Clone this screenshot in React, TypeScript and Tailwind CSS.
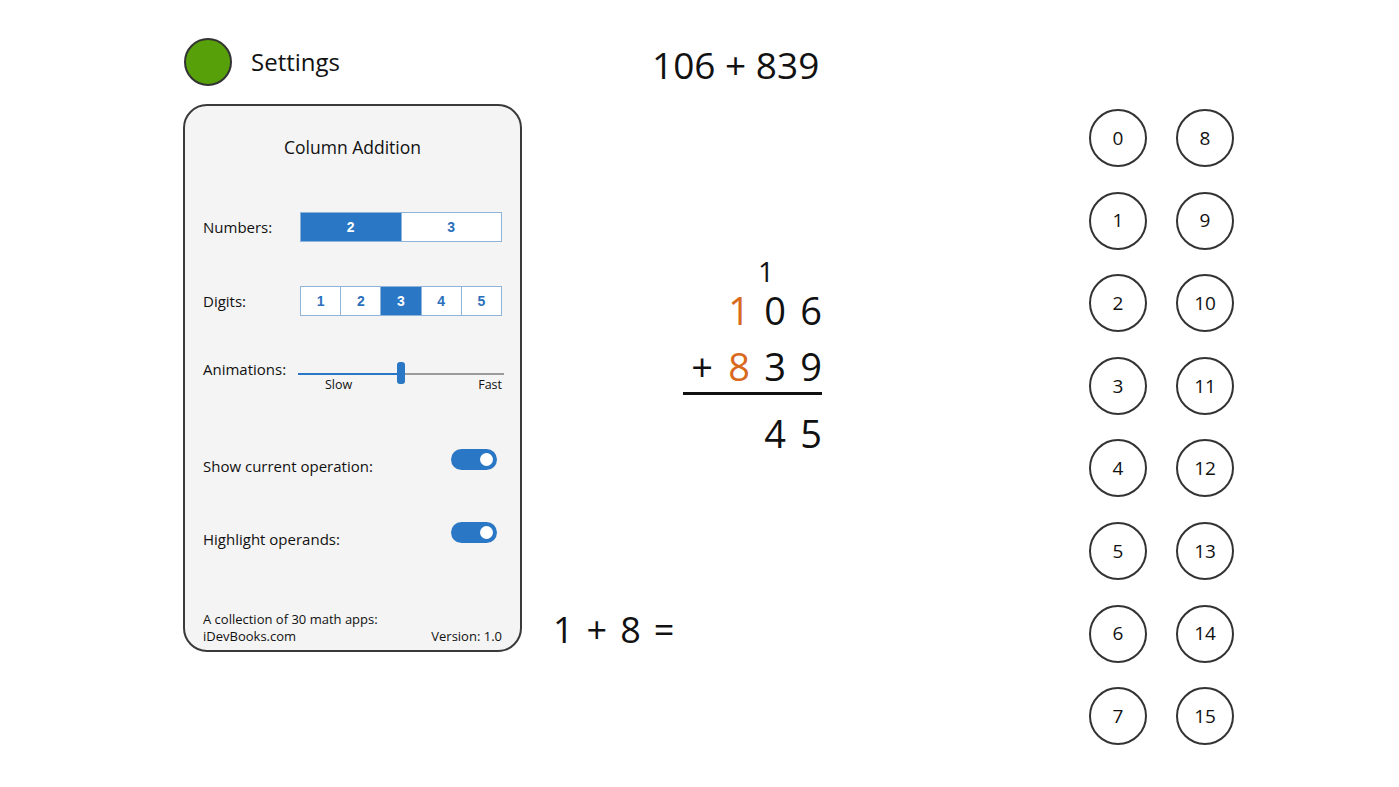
import React from 'react';

const BLUE = 'bg-[#2a77c5]';

const Segmented: React.FC<{ items: string[]; selected: string }> = ({ items, selected }) => (
  <div className="flex h-[30px] w-[202px] border border-[#8fb3da] bg-white font-['Liberation_Sans',sans-serif] text-[14px] font-bold">
    {items.map((it, i) => (
      <div
        key={it}
        className={`flex flex-1 items-center justify-center ${i > 0 ? 'border-l border-[#8fb3da]' : ''} ${
          it === selected ? `${BLUE} text-white` : 'text-[#2a6fbb]'
        }`}
      >
        {it}
      </div>
    ))}
  </div>
);

const Toggle: React.FC = () => (
  <div className={`flex h-[21px] w-[46px] items-center justify-end rounded-full ${BLUE} pr-[4px]`}>
    <div className="h-[13px] w-[13px] rounded-full bg-white" />
  </div>
);

const numbers = [0, 8, 1, 9, 2, 10, 3, 11, 4, 12, 5, 13, 6, 14, 7, 15];

export default function App() {
  return (
    <div className="flex h-[787px] w-[1399px] bg-white pl-[183px] font-['Open_Sans',sans-serif] text-[#111]">
      {/* left: settings */}
      <div className="flex w-[339px] flex-col">
        <div className="mt-[38px] flex h-[48px] items-center gap-[19px]">
          <div className="ml-[1px] h-[48px] w-[48px] rounded-full border-2 border-[#333] bg-[#57a00a]" />
          <span className="text-[24px] leading-none">Settings</span>
        </div>
        <div className="mt-[18px] flex h-[548px] flex-col rounded-[24px] border-2 border-[#3a3a3a] bg-[#f4f4f4] px-[18px] text-[15px]">
          <div className="mt-[29px] h-[24px] text-center text-[17.5px] leading-[24px]">Column Addition</div>

          <div className="mt-[53px] flex items-center justify-between">
            <span>Numbers:</span>
            <Segmented items={['2', '3']} selected="2" />
          </div>

          <div className="mt-[44px] flex items-center justify-between">
            <span>Digits:</span>
            <Segmented items={['1', '2', '3', '4', '5']} selected="3" />
          </div>

          <div className="mt-[44px] flex items-start justify-between">
            <span className="-mt-px leading-[20px]">Animations:</span>
            <div className="relative -mr-[2px] h-[30px] w-[206px]">
              <div className="absolute left-0 top-[13px] h-[2px] w-[103px] bg-[#2a77c5]" />
              <div className="absolute right-0 top-[13px] h-[2px] w-[103px] bg-[#9b9b9b]" />
              <div className="absolute left-[99px] top-[2px] h-[22px] w-[8px] rounded-[3px] bg-[#2a77c5]" />
              <span className="absolute left-[27px] top-[17px] text-[12.5px] leading-[16px]">Slow</span>
              <span className="absolute right-[2px] top-[17px] text-[12.5px] leading-[16px]">Fast</span>
            </div>
          </div>

          <div className="mt-[59px] flex items-start justify-between">
            <span className="mt-[7px] leading-[20px]">Show current operation:</span>
            <div className="mr-[5px]">
              <Toggle />
            </div>
          </div>

          <div className="mt-[46px] flex items-start justify-between">
            <span className="mt-[7px] leading-[20px]">Highlight operands:</span>
            <div className="mr-[5px]">
              <Toggle />
            </div>
          </div>

          <div className="mt-auto pb-[5px] text-[13px] leading-[17px]">
            <div>A collection of 30 math apps:</div>
            <div className="flex justify-between">
              <span>iDevBooks.com</span>
              <span>Version: 1.0</span>
            </div>
          </div>
        </div>
      </div>

      {/* middle: problem */}
      <div className="ml-[31px] flex w-[536px] flex-col">
        <div className="ml-[99px] mt-[40px] h-[50px] text-[37px] leading-[50px]">106 + 839</div>

        <div className="ml-[130px] mt-[166px] flex flex-col">
          <div className="grid h-[30px] grid-cols-[38px_36px_36px_36px] text-center text-[28px] leading-[30px]">
            <span />
            <span />
            <span className="-ml-[18px]">1</span>
            <span />
          </div>
          <div className="mt-[2px] grid h-[44px] grid-cols-[38px_36px_36px_36px] text-center text-[38px] leading-[44px]">
            <span />
            <span className="text-[#d9691c]">1</span>
            <span>0</span>
            <span>6</span>
          </div>
          <div className="mt-[12px] grid h-[44px] grid-cols-[38px_36px_36px_36px] text-center text-[38px] leading-[44px]">
            <span>+</span>
            <span className="text-[#d9691c]">8</span>
            <span>3</span>
            <span>9</span>
          </div>
          <div className="mt-[4px] h-[3px] w-[139px] bg-[#111]" />
          <div className="mt-[16px] grid h-[44px] grid-cols-[38px_36px_36px_36px] text-center text-[38px] leading-[44px]">
            <span />
            <span />
            <span>4</span>
            <span>5</span>
          </div>
        </div>

        <div className="mt-[153px] flex h-[44px] gap-[13px] text-[36px] leading-[44px]">
          <span>1</span>
          <span>+</span>
          <span>8</span>
          <span>=</span>
        </div>
      </div>

      {/* right: answer buttons */}
      <div className="pt-[109px]">
        <div className="grid grid-cols-[58px_58px] gap-x-[29px] gap-y-[24.6px]">
          {numbers.map((n) => (
            <div
              key={n}
              className="flex h-[58px] w-[58px] items-center justify-center rounded-full border-2 border-[#333] text-[19px]"
            >
              {n}
            </div>
          ))}
        </div>
      </div>
    </div>
  );
}
